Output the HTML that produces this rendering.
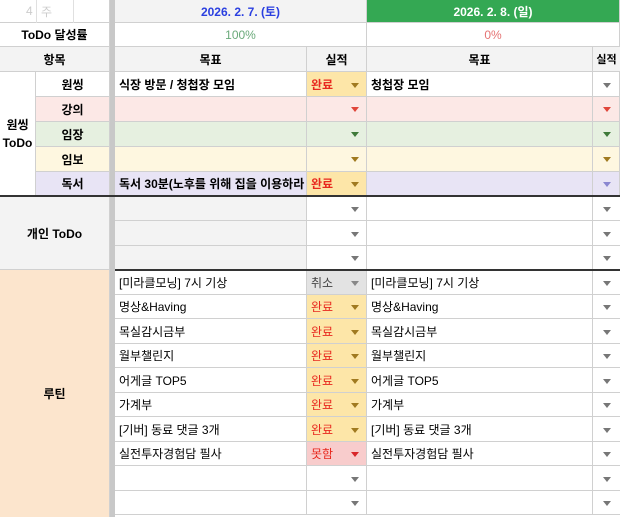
<!DOCTYPE html><html><head><meta charset="utf-8"><style>
*{box-sizing:border-box;margin:0;padding:0}
body{width:620px;height:517px;overflow:hidden;background:#fff;font-family:"Liberation Sans","Noto Sans CJK KR",sans-serif;font-size:12px;color:#000;position:relative}
.c{position:absolute;border-right:1px solid #d0d0d0;border-bottom:1px solid #d0d0d0;display:flex;align-items:center;white-space:nowrap;overflow:hidden}
.ctr{justify-content:center}
.b{font-weight:bold}
.t{padding-left:4px}
.a{position:absolute;width:0;height:0;border-left:4px solid transparent;border-right:4px solid transparent;border-top:5px solid #777}
.r{color:#e8281e}
.rc{position:absolute;left:593px;width:27px;border-bottom:1px solid #d0d0d0}
</style></head><body>
<div class="c" style="left:0;top:0;width:110px;height:23px;background:#fff"><span style="position:absolute;left:26px;color:#ccc">4</span><span style="position:absolute;left:41px;color:#ccc">주</span></div>
<div class="c" style="left:36px;top:0;width:1px;height:23px;border:none;background:#e0e0e0"></div>
<div class="c" style="left:73px;top:0;width:1px;height:23px;border:none;background:#e0e0e0"></div>
<div class="c ctr b" style="left:115px;top:0;width:252px;height:23px;background:#f3f3f3;color:#2a3fe0">2026. 2. 7. (토)</div>
<div class="c ctr b" style="left:367px;top:0;width:253px;height:23px;background:#34a853;color:#fff">2026. 2. 8. (일)</div>
<div class="c ctr b" style="left:0;top:23px;width:110px;height:24px">ToDo 달성률</div>
<div class="c ctr" style="left:115px;top:23px;width:252px;height:24px;color:#6aaa7a">100%</div>
<div class="c ctr" style="left:367px;top:23px;width:253px;height:24px;color:#e57373">0%</div>
<div class="c ctr b" style="left:0;top:47px;width:110px;height:25px;background:#f3f3f3">항목</div>
<div class="c ctr b" style="left:115px;top:47px;width:192px;height:25px;background:#f3f3f3">목표</div>
<div class="c ctr b" style="left:307px;top:47px;width:60px;height:25px;background:#f3f3f3">실적</div>
<div class="c ctr b" style="left:367px;top:47px;width:226px;height:25px;background:#f3f3f3">목표</div>
<div class="c ctr b" style="left:593px;top:47px;width:27px;height:25px;background:#f3f3f3;font-size:11px;border-right:none">실적</div>
<div style="position:absolute;left:110px;top:0;width:5px;height:517px;background:#c8c8c8"></div>
<div class="c ctr b" style="left:0;top:72px;width:36px;height:124px;flex-direction:column;line-height:18px">원씽<br><span>ToDo</span></div>
<div class="c ctr b" style="left:36px;top:72px;width:74px;height:25px;background:#fff">원씽</div>
<div class="c ctr b" style="left:36px;top:97px;width:74px;height:25px;background:#fce8e6">강의</div>
<div class="c ctr b" style="left:36px;top:122px;width:74px;height:25px;background:#e6f0e0">임장</div>
<div class="c ctr b" style="left:36px;top:147px;width:74px;height:25px;background:#fef7e0">임보</div>
<div class="c ctr b" style="left:36px;top:172px;width:74px;height:24px;background:#e8e4f5">독서</div>

<div class="c t b" style="left:115px;top:72px;width:192px;height:25px">식장 방문 / 청첩장 모임</div>
<div class="c t b r" style="left:307px;top:72px;width:60px;height:25px;background:#fde6a8">완료</div>
<div class="c t b" style="left:367px;top:72px;width:226px;height:25px">청첩장 모임</div>
<div class="c" style="left:593px;top:72px;width:27px;height:25px"></div>

<div class="c" style="left:115px;top:97px;width:192px;height:25px;background:#fce8e6"></div>
<div class="c" style="left:307px;top:97px;width:60px;height:25px;background:#fce8e6"></div>
<div class="c" style="left:367px;top:97px;width:226px;height:25px;background:#fce8e6"></div>
<div class="c" style="left:593px;top:97px;width:27px;height:25px;background:#fce8e6"></div>

<div class="c" style="left:115px;top:122px;width:192px;height:25px;background:#e6f0e0"></div>
<div class="c" style="left:307px;top:122px;width:60px;height:25px;background:#e6f0e0"></div>
<div class="c" style="left:367px;top:122px;width:226px;height:25px;background:#e6f0e0"></div>
<div class="c" style="left:593px;top:122px;width:27px;height:25px;background:#e6f0e0"></div>

<div class="c" style="left:115px;top:147px;width:192px;height:25px;background:#fef7e0"></div>
<div class="c" style="left:307px;top:147px;width:60px;height:25px;background:#fef7e0"></div>
<div class="c" style="left:367px;top:147px;width:226px;height:25px;background:#fef7e0"></div>
<div class="c" style="left:593px;top:147px;width:27px;height:25px;background:#fef7e0"></div>

<div class="c t b" style="left:115px;top:172px;width:192px;height:24px;background:#e8e4f5">독서 30분(노후를 위해 집을 이용하라</div>
<div class="c t b r" style="left:307px;top:172px;width:60px;height:24px;background:#fde6a8">완료</div>
<div class="c" style="left:367px;top:172px;width:226px;height:24px;background:#e8e4f5"></div>
<div class="c" style="left:593px;top:172px;width:27px;height:24px;background:#e8e4f5"></div>
<div style="position:absolute;left:0;top:195px;width:620px;height:2px;background:#333"></div>

<div class="c ctr b" style="left:0;top:197px;width:110px;height:73px;background:#f3f3f3">개인 ToDo</div>
<div class="c" style="left:115px;top:197px;width:192px;height:24px;background:#f3f3f3"></div>
<div class="c" style="left:115px;top:221px;width:192px;height:25px;background:#f3f3f3"></div>
<div class="c" style="left:115px;top:246px;width:192px;height:24px;background:#f3f3f3"></div>
<div class="c" style="left:307px;top:197px;width:60px;height:24px"></div>
<div class="c" style="left:307px;top:221px;width:60px;height:25px"></div>
<div class="c" style="left:307px;top:246px;width:60px;height:24px"></div>
<div class="c" style="left:367px;top:197px;width:226px;height:24px"></div>
<div class="c" style="left:367px;top:221px;width:226px;height:25px"></div>
<div class="c" style="left:367px;top:246px;width:226px;height:24px"></div>
<div class="rc" style="top:197px;height:24px"></div>
<div class="rc" style="top:221px;height:25px"></div>
<div style="position:absolute;left:115px;top:269px;width:505px;height:2px;background:#333"></div>

<div class="c ctr b" style="left:0;top:270px;width:110px;height:247px;background:#fce5cd;border-bottom:none">루틴</div>

<div class="c t" style="left:115px;top:271px;width:192px;height:24px">[미라클모닝] 7시 기상</div>
<div class="c t" style="left:307px;top:271px;width:60px;height:24px;background:#e3e3e3;color:#444">취소</div>
<div class="c t" style="left:367px;top:271px;width:226px;height:24px">[미라클모닝] 7시 기상</div>

<div class="c t" style="left:115px;top:295px;width:192px;height:24px">명상&amp;Having</div>
<div class="c t r" style="left:307px;top:295px;width:60px;height:24px;background:#fde6a8">완료</div>
<div class="c t" style="left:367px;top:295px;width:226px;height:24px">명상&amp;Having</div>

<div class="c t" style="left:115px;top:319px;width:192px;height:25px">목실감시금부</div>
<div class="c t r" style="left:307px;top:319px;width:60px;height:25px;background:#fde6a8">완료</div>
<div class="c t" style="left:367px;top:319px;width:226px;height:25px">목실감시금부</div>

<div class="c t" style="left:115px;top:344px;width:192px;height:24px">월부챌린지</div>
<div class="c t r" style="left:307px;top:344px;width:60px;height:24px;background:#fde6a8">완료</div>
<div class="c t" style="left:367px;top:344px;width:226px;height:24px">월부챌린지</div>

<div class="c t" style="left:115px;top:368px;width:192px;height:25px">어게글 TOP5</div>
<div class="c t r" style="left:307px;top:368px;width:60px;height:25px;background:#fde6a8">완료</div>
<div class="c t" style="left:367px;top:368px;width:226px;height:25px">어게글 TOP5</div>

<div class="c t" style="left:115px;top:393px;width:192px;height:24px">가계부</div>
<div class="c t r" style="left:307px;top:393px;width:60px;height:24px;background:#fde6a8">완료</div>
<div class="c t" style="left:367px;top:393px;width:226px;height:24px">가계부</div>

<div class="c t" style="left:115px;top:417px;width:192px;height:25px">[기버] 동료 댓글 3개</div>
<div class="c t r" style="left:307px;top:417px;width:60px;height:25px;background:#fde6a8">완료</div>
<div class="c t" style="left:367px;top:417px;width:226px;height:25px">[기버] 동료 댓글 3개</div>

<div class="c t" style="left:115px;top:442px;width:192px;height:24px">실전투자경험담 필사</div>
<div class="c t r" style="left:307px;top:442px;width:60px;height:24px;background:#f8cccc">못함</div>
<div class="c t" style="left:367px;top:442px;width:226px;height:24px">실전투자경험담 필사</div>

<div class="c" style="left:115px;top:466px;width:192px;height:25px"></div>
<div class="c" style="left:307px;top:466px;width:60px;height:25px"></div>
<div class="c" style="left:367px;top:466px;width:226px;height:25px"></div>
<div class="c" style="left:115px;top:491px;width:192px;height:24px"></div>
<div class="c" style="left:307px;top:491px;width:60px;height:24px"></div>
<div class="c" style="left:367px;top:491px;width:226px;height:24px"></div>
<div class="rc" style="top:271px;height:24px"></div>
<div class="rc" style="top:295px;height:24px"></div>
<div class="rc" style="top:319px;height:25px"></div>
<div class="rc" style="top:344px;height:24px"></div>
<div class="rc" style="top:368px;height:25px"></div>
<div class="rc" style="top:393px;height:24px"></div>
<div class="rc" style="top:417px;height:25px"></div>
<div class="rc" style="top:442px;height:24px"></div>
<div class="rc" style="top:466px;height:25px"></div>
<div class="rc" style="top:491px;height:24px"></div>

<div class="a" style="left:351px;top:83px;border-top-color:#a07a20"></div>
<div class="a" style="left:351px;top:107px;border-top-color:#e0463a"></div>
<div class="a" style="left:351px;top:132px;border-top-color:#3f7a3a"></div>
<div class="a" style="left:351px;top:157px;border-top-color:#a07a20"></div>
<div class="a" style="left:351px;top:182px;border-top-color:#a07a20"></div>
<div class="a" style="left:603px;top:83px"></div>
<div class="a" style="left:603px;top:107px;border-top-color:#e0463a"></div>
<div class="a" style="left:603px;top:132px;border-top-color:#3f7a3a"></div>
<div class="a" style="left:603px;top:157px;border-top-color:#a07a20"></div>
<div class="a" style="left:603px;top:182px;border-top-color:#8a86d0"></div>
<div class="a" style="left:351px;top:207px"></div>
<div class="a" style="left:351px;top:232px"></div>
<div class="a" style="left:351px;top:256px"></div>
<div class="a" style="left:603px;top:207px"></div>
<div class="a" style="left:603px;top:232px"></div>
<div class="a" style="left:603px;top:256px"></div>
<div class="a" style="left:351px;top:281px;border-top-color:#888"></div>
<div class="a" style="left:351px;top:305px;border-top-color:#a07a20"></div>
<div class="a" style="left:351px;top:330px;border-top-color:#a07a20"></div>
<div class="a" style="left:351px;top:354px;border-top-color:#a07a20"></div>
<div class="a" style="left:351px;top:379px;border-top-color:#a07a20"></div>
<div class="a" style="left:351px;top:403px;border-top-color:#a07a20"></div>
<div class="a" style="left:351px;top:428px;border-top-color:#a07a20"></div>
<div class="a" style="left:351px;top:452px;border-top-color:#d8262a"></div>
<div class="a" style="left:351px;top:477px"></div>
<div class="a" style="left:351px;top:501px"></div>
<div class="a" style="left:603px;top:281px"></div>
<div class="a" style="left:603px;top:305px"></div>
<div class="a" style="left:603px;top:330px"></div>
<div class="a" style="left:603px;top:354px"></div>
<div class="a" style="left:603px;top:379px"></div>
<div class="a" style="left:603px;top:403px"></div>
<div class="a" style="left:603px;top:428px"></div>
<div class="a" style="left:603px;top:452px"></div>
<div class="a" style="left:603px;top:477px"></div>
<div class="a" style="left:603px;top:501px"></div>
</body></html>
